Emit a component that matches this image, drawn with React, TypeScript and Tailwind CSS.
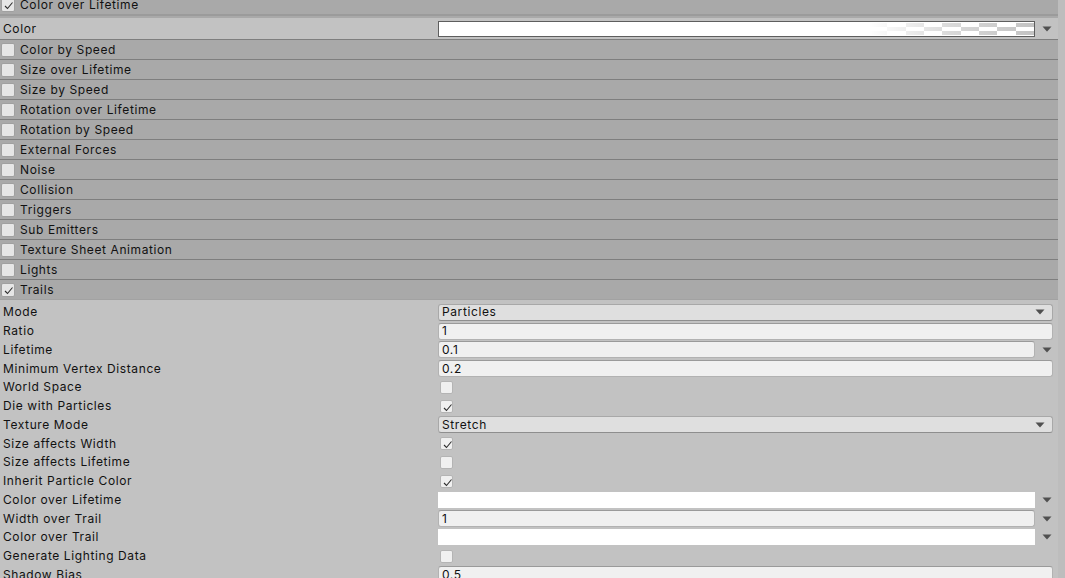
import React from "react";

type Row =
  | { label: string; kind: "dropdown"; value: string }
  | { label: string; kind: "text"; value: string }
  | { label: string; kind: "curve"; value: string }
  | { label: string; kind: "check"; checked: boolean }
  | { label: string; kind: "gradient" };

const modules = [
  "Color by Speed",
  "Size over Lifetime",
  "Size by Speed",
  "Rotation over Lifetime",
  "Rotation by Speed",
  "External Forces",
  "Noise",
  "Collision",
  "Triggers",
  "Sub Emitters",
  "Texture Sheet Animation",
  "Lights",
];

const trailRows: Row[] = [
  { label: "Mode", kind: "dropdown", value: "Particles" },
  { label: "Ratio", kind: "text", value: "1" },
  { label: "Lifetime", kind: "curve", value: "0.1" },
  { label: "Minimum Vertex Distance", kind: "text", value: "0.2" },
  { label: "World Space", kind: "check", checked: false },
  { label: "Die with Particles", kind: "check", checked: true },
  { label: "Texture Mode", kind: "dropdown", value: "Stretch" },
  { label: "Size affects Width", kind: "check", checked: true },
  { label: "Size affects Lifetime", kind: "check", checked: false },
  { label: "Inherit Particle Color", kind: "check", checked: true },
  { label: "Color over Lifetime", kind: "gradient" },
  { label: "Width over Trail", kind: "curve", value: "1" },
  { label: "Color over Trail", kind: "gradient" },
  { label: "Generate Lighting Data", kind: "check", checked: false },
  { label: "Shadow Bias", kind: "text", value: "0.5" },
];

const txt = "text-[12px] text-[#111] tracking-[0.6px] whitespace-nowrap";

function Check({ size = 13 }: { size?: number }) {
  return (
    <svg width={size} height={size} viewBox="0 0 13 13" className="absolute left-0 top-0">
      <polyline points="3,7 5.5,9.5 10.5,3.5" fill="none" stroke="#2e2e2e" strokeWidth="1.1" />
    </svg>
  );
}

function Arrow() {
  return (
    <svg width="10" height="6" viewBox="0 0 10 6">
      <polygon points="0.5,0.5 9.5,0.5 5,5.5" fill="#505050" />
    </svg>
  );
}

function ModuleHeader({ title, checked }: { title: string; checked?: boolean }) {
  return (
    <div className="shrink-0 h-[20px] border-t border-[#7e7e7e] bg-[#a9a9a9] flex items-center">
      <div className="relative ml-[1px] w-[14px] h-[14px] rounded-[2px] bg-[#e6e6e6] border border-[#a0a0a0]">
        {checked && <Check size={13} />}
      </div>
      <span className={"ml-[5px] " + txt}>{title}</span>
    </div>
  );
}

function GradientField({ bordered }: { bordered?: boolean }) {
  const cols = Array.from({ length: 9 });
  return (
    <div
      className={
        "relative flex-1 h-[16px] bg-white overflow-hidden " +
        (bordered ? "border border-[#5e5e5e]" : "")
      }
    >
      {bordered && (
        <div className="absolute right-0 top-[1px] bottom-[1px] w-[165px] flex flex-col">
          {[0, 1, 2].map((r) => (
            <div key={r} className="flex flex-1">
              {cols.map((_, c) => (
                <div
                  key={c}
                  className={"flex-1 " + ((r + c) % 2 === 0 ? "bg-[#c0c0c0]" : "bg-white")}
                />
              ))}
            </div>
          ))}
          <div className="absolute inset-0 bg-gradient-to-r from-white via-white/40 to-white/5" />
        </div>
      )}
    </div>
  );
}

function Field({ row }: { row: Row }) {
  if (row.kind === "check") {
    return (
      <div className="relative ml-[2px] w-[13px] h-[13px] rounded-[2px] bg-[#f0f0f0] border border-[#b4b4b4]">
        {row.checked && <Check />}
      </div>
    );
  }
  if (row.kind === "dropdown") {
    return (
      <div className="flex-1 mr-[5px] h-[17px] rounded-[3px] bg-[#dfdfdf] border border-[#a8a8a8] border-b-[#8e8e8e] flex items-center justify-between pl-[3px] pr-[7px]">
        <span className={txt}>{row.value}</span>
        <Arrow />
      </div>
    );
  }
  if (row.kind === "text") {
    return (
      <div className="flex-1 mr-[5px] h-[17px] rounded-[3px] bg-[#f0f0f0] border border-[#b2b2b2] border-t-[#9a9a9a] flex items-center pl-[3px]">
        <span className={txt}>{row.value}</span>
      </div>
    );
  }
  if (row.kind === "curve") {
    return (
      <div className="flex-1 flex items-center">
        <div className="flex-1 h-[17px] rounded-[3px] bg-[#f0f0f0] border border-[#b2b2b2] border-t-[#9a9a9a] flex items-center pl-[3px]">
          <span className={txt}>{row.value}</span>
        </div>
        <div className="w-[23px] flex justify-center pl-[1px]">
          <Arrow />
        </div>
      </div>
    );
  }
  return (
    <div className="flex-1 flex items-center">
      <GradientField />
      <div className="w-[23px] flex justify-center pl-[1px]">
        <Arrow />
      </div>
    </div>
  );
}

export default function App() {
  return (
    <div
      className="w-[1065px] h-[578px] overflow-hidden bg-[#c2c2c2] flex"
      style={{ fontFamily: "Inter, 'Noto Sans', sans-serif" }}
    >
      <div className="w-[1058px] flex flex-col">
        {/* Color over Lifetime module, scrolled partly out of view */}
        <div className="shrink-0 -mt-[4px] h-[18px] bg-[#a9a9a9] flex items-center">
          <div className="relative ml-[1px] w-[14px] h-[14px] rounded-[2px] bg-[#e6e6e6] border border-[#a0a0a0]">
            <Check size={13} />
          </div>
          <span className={"ml-[5px] " + txt}>Color over Lifetime</span>
        </div>
        <div className="shrink-0 h-[2px] bg-[#9b9b9b]" />
        <div className="shrink-0 h-[2px] bg-[#a9a9a9]" />
        <div className="shrink-0 h-[21px] flex items-center">
          <span className={"w-[438px] shrink-0 pl-[3px] " + txt}>Color</span>
          <GradientField bordered />
          <div className="w-[23px] flex justify-center pl-[1px]">
            <Arrow />
          </div>
        </div>

        {modules.map((m) => (
          <ModuleHeader key={m} title={m} />
        ))}
        <ModuleHeader title="Trails" checked />
        <div className="shrink-0 h-[1px] bg-[#a2a2a2]" />

        {/* Trails module */}
        <div className="shrink-0 pt-[3px]">
          {trailRows.map((row) => (
            <div key={row.label} className="h-[18.75px] flex items-center">
              <span className={"w-[438px] shrink-0 pl-[3px] " + txt}>{row.label}</span>
              <Field row={row} />
            </div>
          ))}
        </div>
      </div>
      <div className="w-[7px] bg-[#bdbdbd]" />
    </div>
  );
}
